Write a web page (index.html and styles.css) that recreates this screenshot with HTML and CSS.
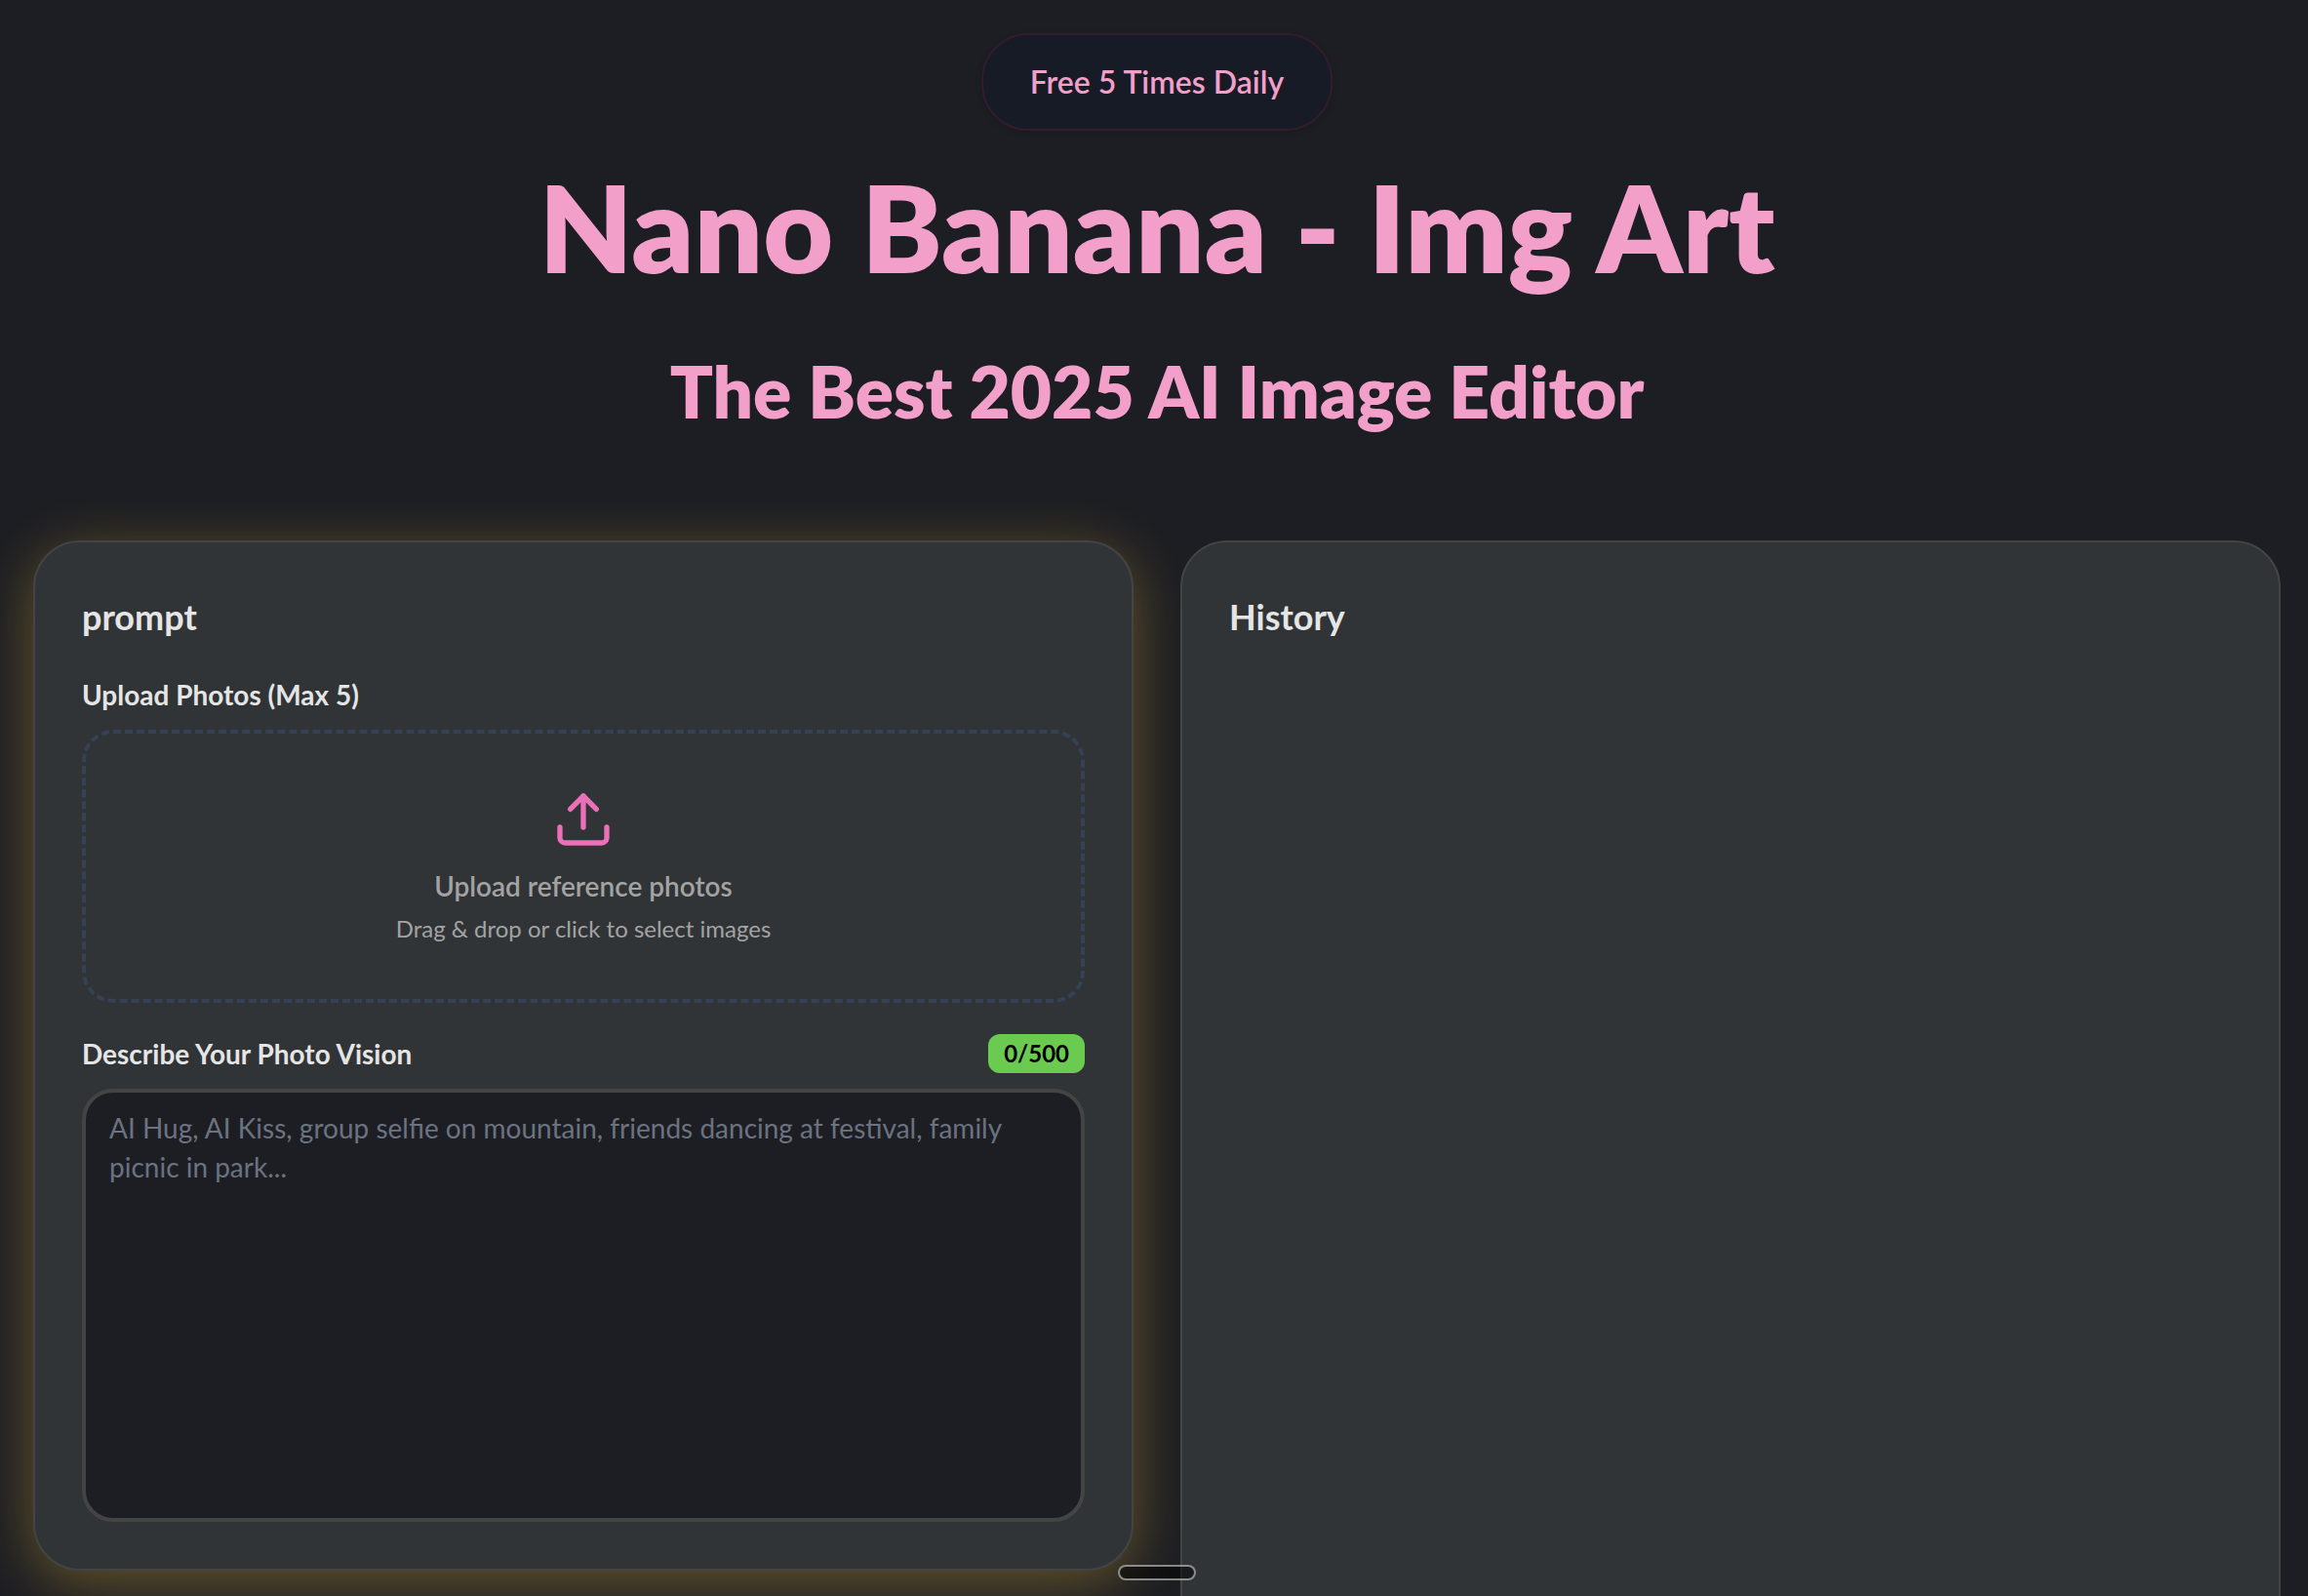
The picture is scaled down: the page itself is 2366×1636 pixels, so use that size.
FILE: index.html
```html
<!DOCTYPE html>
<html lang="en">
    <head>
        <meta charset="utf-8">
        <meta name="viewport" content="width=device-width, initial-scale=1">
        <title>Nano Banana - Img Art</title>
        <link rel="stylesheet" href="styles.css">
    </head>
    <body>
        <header class="hero">
            <p class="pill">Free 5 Times Daily</p>
            <h1 class="title">Nano Banana - Img Art</h1>
            <h2 class="subtitle">The Best 2025 AI Image Editor</h2>
        </header>

        <main class="panels">
            <form class="card card-glow">
                <h3 class="card-title">prompt</h3>

                <label class="label" for="photos">Upload Photos (Max 5)</label>
                <label class="dropzone">
                    <input class="file-input" type="file" id="photos" accept="image/*" multiple>
                    <svg class="upload-icon" viewBox="0 0 24 24" fill="none" stroke="currentColor" stroke-width="2" stroke-linecap="round" stroke-linejoin="round" aria-hidden="true">
                        <path d="M21 15v4a2 2 0 0 1-2 2H5a2 2 0 0 1-2-2v-4"/>
                        <path d="M17 8l-5-5-5 5"/>
                        <path d="M12 3v12"/>
                    </svg>
                    <span class="drop-title">Upload reference photos</span>
                    <span class="drop-hint">Drag &amp; drop or click to select images</span>
                </label>

                <div class="label-row">
                    <label class="label" for="vision">Describe Your Photo Vision</label>
                    <span class="counter">0/500</span>
                </div>
                <textarea class="vision" id="vision" maxlength="500" placeholder="AI Hug, AI Kiss, group selfie on mountain, friends dancing at festival, family picnic in park..."></textarea>
            </form>

            <section class="card history">
                <h3 class="card-title">History</h3>
            </section>
        </main>

        <div class="home-bar"></div>
    </body>
</html>
```
FILE: styles.css
```css
* {
    padding: 0;
    margin: 0;
    box-sizing: border-box;
}

body {
    height: 100vh;
    overflow: hidden;
    padding: 34px 28px 0 34px;
    background-color: #1d1e23;
    color: #e5e5e5;
    font-family: Lato, "Liberation Sans", sans-serif;
}

.hero {
    display: flex;
    flex-direction: column;
    align-items: center;
    text-align: center;
    color: #f29fca;
    margin-bottom: 104px;
}

.pill {
    padding: 24px 48px;
    border: 2px solid #331c2e;
    border-radius: 48px;
    background-color: #171b25;
    box-shadow: 0 2px 6px rgba(0, 0, 0, 0.15);
    font-size: 32px;
    line-height: 48px;
    font-weight: 600;
}

.title {
    margin-top: 26px;
    font-size: 124px;
    line-height: 144px;
    font-weight: 800;
}

.subtitle {
    margin-top: 48px;
    font-size: 73px;
    line-height: 98px;
    font-weight: 800;
}

.panels {
    display: grid;
    grid-template-columns: 1fr 1fr;
    align-items: start;
    gap: 48px;
}

.card {
    display: flex;
    flex-direction: column;
    padding: 48px;
    border: 2px solid #444444;
    border-radius: 48px;
    background-color: #303436;
}

.card-glow {
    box-shadow: 0 12px 60px rgba(250, 200, 60, 0.33);
}

.card-title {
    margin-bottom: 32px;
    font-size: 36px;
    line-height: 56px;
    font-weight: 700;
}

.label {
    font-size: 28px;
    line-height: 40px;
    font-weight: 700;
}

.dropzone {
    display: flex;
    flex-direction: column;
    align-items: center;
    margin-top: 16px;
    padding: 56px;
    border: 4px dashed #374155;
    border-radius: 32px;
    color: #a3a3a3;
    cursor: pointer;
}

.file-input {
    position: absolute;
    width: 1px;
    height: 1px;
    opacity: 0;
}

.upload-icon {
    width: 64px;
    height: 64px;
    margin-bottom: 16px;
    color: #ec70b8;
}

.drop-title {
    margin-bottom: 8px;
    font-size: 28px;
    line-height: 40px;
    font-weight: 600;
}

.drop-hint {
    font-size: 24px;
    line-height: 32px;
}

.label-row {
    display: flex;
    align-items: center;
    justify-content: space-between;
    margin: 32px 0 16px;
}

.counter {
    padding: 4px 16px;
    border-radius: 12px;
    background-color: #6bcb50;
    color: #000;
    font-size: 24px;
    line-height: 32px;
    font-weight: 700;
}

.vision {
    width: 100%;
    height: 444px;
    padding: 16px 24px;
    border: 4px solid #444444;
    border-radius: 32px;
    background-color: #1d1e23;
    color: #e5e5e5;
    font-family: inherit;
    font-size: 28px;
    line-height: 40px;
    resize: none;
}

.vision::placeholder {
    color: #6b7280;
}

.history {
    min-height: 1200px;
}

/* floats above the page, centred on the content column */
.home-bar {
    position: fixed;
    bottom: 16px;
    left: 6px;
    right: 0;
    width: 80px;
    height: 16px;
    margin: 0 auto;
    border: 2px solid rgba(255, 255, 255, 0.5);
    border-radius: 8px;
    background-color: rgba(0, 0, 0, 0.5);
}
```
